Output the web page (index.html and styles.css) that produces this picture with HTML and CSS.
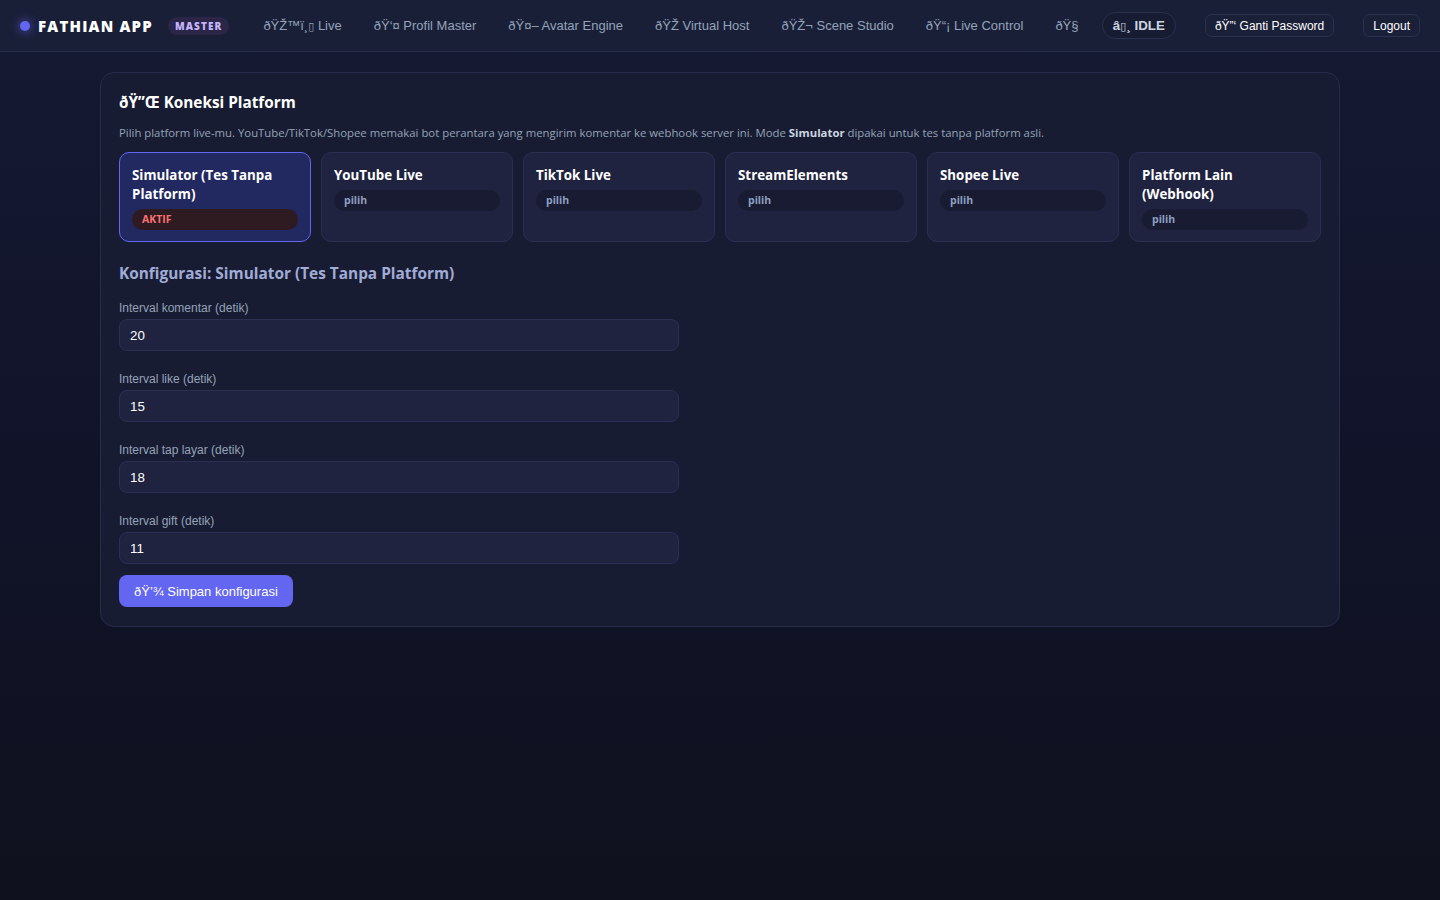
FILE: index.html
```html
<!DOCTYPE html>
<html lang="id">
<head>
<meta charset="utf-8">
<title>Fathian App</title>
<link rel="stylesheet" href="styles.css">
</head>
<body>
<header class="topbar">
  <div class="brand">
    <span class="brand-dot"></span>
    <span class="brand-name">FATHIAN APP</span>
    <span class="brand-badge">MASTER</span>
  </div>
  <nav class="tabs">
    <button class="tab">ðŸŽ™ï¸<span class="tofu">▯</span> Live</button>
    <button class="tab">ðŸ‘¤ Profil Master</button>
    <button class="tab">ðŸ¤– Avatar Engine</button>
    <button class="tab">ðŸŽ&shy; Virtual Host</button>
    <button class="tab">ðŸŽ¬ Scene Studio</button>
    <button class="tab">ðŸ“¡ Live Control</button>
    <button class="tab">ðŸ§&shy;</button>
  </nav>
  <div class="actions">
    <span class="status-pill">â<span class="tofu">▯</span>¸ IDLE</span>
    <button class="btn-ghost">ðŸ”‘ Ganti Password</button>
    <button class="btn-ghost">Logout</button>
  </div>
</header>

<main class="page">
  <section class="panel">
    <h2 class="panel-title">ðŸ”Œ Koneksi Platform</h2>
    <p class="panel-desc">Pilih platform live-mu. YouTube/TikTok/Shopee memakai bot perantara yang mengirim komentar ke webhook server ini. Mode <b>Simulator</b> dipakai untuk tes tanpa platform asli.</p>

    <div class="platforms">
      <div class="platform active">
        <div class="platform-name">Simulator (Tes Tanpa Platform)</div>
        <span class="platform-tag tag-active">AKTIF</span>
      </div>
      <div class="platform">
        <div class="platform-name">YouTube Live</div>
        <span class="platform-tag">pilih</span>
      </div>
      <div class="platform">
        <div class="platform-name">TikTok Live</div>
        <span class="platform-tag">pilih</span>
      </div>
      <div class="platform">
        <div class="platform-name">StreamElements</div>
        <span class="platform-tag">pilih</span>
      </div>
      <div class="platform">
        <div class="platform-name">Shopee Live</div>
        <span class="platform-tag">pilih</span>
      </div>
      <div class="platform">
        <div class="platform-name">Platform Lain (Webhook)</div>
        <span class="platform-tag">pilih</span>
      </div>
    </div>

    <h3 class="config-title">Konfigurasi: Simulator (Tes Tanpa Platform)</h3>

    <form class="config-form">
      <div class="field">
        <label class="field-label">Interval komentar (detik)</label>
        <input class="field-input" type="text" value="20">
      </div>
      <div class="field">
        <label class="field-label">Interval like (detik)</label>
        <input class="field-input" type="text" value="15">
      </div>
      <div class="field">
        <label class="field-label">Interval tap layar (detik)</label>
        <input class="field-input" type="text" value="18">
      </div>
      <div class="field last">
        <label class="field-label">Interval gift (detik)</label>
        <input class="field-input" type="text" value="11">
      </div>
      <button type="button" class="btn-primary">ðŸ’¾ Simpan konfigurasi</button>
    </form>
  </section>
</main>
</body>
</html>
```

FILE: styles.css
```css
* { box-sizing: border-box; }

html, body {
  margin: 0;
  min-height: 100%;
}

body {
  min-height: 900px;
  background: linear-gradient(180deg, #151a33 0%, #11142a 45%, #0f111e 100%);
  color: #e2e8f0;
  font-family: "Open Sans", "Noto Sans", sans-serif;
}

/* ---------- top bar ---------- */
.topbar {
  height: 52px;
  display: flex;
  align-items: center;
  padding: 0 20px;
  background: #1a1f38;
  border-bottom: 1px solid #262b47;
  white-space: nowrap;
}

.brand {
  display: flex;
  align-items: center;
  flex-shrink: 0;
}

.brand-dot {
  width: 10px;
  height: 10px;
  border-radius: 50%;
  background: #6366f1;
  box-shadow: 0 0 10px 2px rgba(99, 102, 241, 0.45);
  margin-right: 8px;
}

.brand-name {
  font-weight: 800;
  font-size: 15px;
  letter-spacing: 1.2px;
  color: #ffffff;
}

.brand-badge {
  margin-left: 15px;
  padding: 2px 7px;
  border-radius: 999px;
  background: #2b2548;
  color: #c4b5fd;
  font-size: 10px;
  font-weight: 800;
  letter-spacing: 1.1px;
  line-height: 14px;
}

.tabs {
  display: flex;
  align-items: center;
  margin-left: 18px;
  flex-shrink: 0;
}

.tab {
  background: transparent;
  border: none;
  padding: 6px 16px;
  color: #94a3b8;
  font-family: "Liberation Sans", Arial, sans-serif;
  font-size: 13px;
  white-space: nowrap;
}

.tofu {
  font-family: "DejaVu Sans", sans-serif;
  font-size: 0.85em;
  font-weight: 400;
}

.actions {
  display: flex;
  align-items: center;
  margin-left: auto;
  gap: 29px;
  flex-shrink: 0;
}

.status-pill {
  display: inline-flex;
  align-items: center;
  height: 27px;
  padding: 0 10px;
  border: 1px solid #2a3050;
  border-radius: 999px;
  background: #181c33;
  color: #cbd5e1;
  font-family: "Liberation Sans", Arial, sans-serif;
  font-weight: 700;
  font-size: 13.33px;
  white-space: nowrap;
}

.btn-ghost {
  height: 23px;
  padding: 0 9px;
  border: 1px solid #2a3050;
  border-radius: 7px;
  background: #1b2039;
  color: #ffffff;
  font-family: "Liberation Sans", Arial, sans-serif;
  font-size: 12px;
  white-space: nowrap;
}

/* ---------- main panel ---------- */
.page {
  padding: 20px 100px;
}

.panel {
  max-width: 1240px;
  margin: 0 auto;
  padding: 18px 18px 19px;
  background: #181c32;
  border: 1px solid #272c48;
  border-radius: 14px;
}

.panel-title {
  margin: 0;
  font-size: 15.3px;
  font-weight: 700;
  line-height: 22px;
  color: #ffffff;
}

.panel-desc {
  margin: 12px 0 11px;
  font-size: 11.35px;
  line-height: 16px;
  color: #94a3b8;
}

.panel-desc b {
  color: #cbd5e1;
}

.platforms {
  display: grid;
  grid-template-columns: repeat(6, 1fr);
  gap: 10px;
}

.platform {
  padding: 13px 12px 11px;
  background: #1f2340;
  border: 1px solid #2b3052;
  border-radius: 10px;
}

.platform.active {
  background: #222860;
  border-color: #6366f1;
}

.platform-name {
  font-size: 13.35px;
  font-weight: 700;
  line-height: 19px;
  color: #ffffff;
}

.platform-tag {
  display: block;
  margin-top: 5px;
  padding: 0 10px;
  height: 21px;
  line-height: 21px;
  border-radius: 999px;
  background: #181b31;
  color: #8ea0c2;
  font-size: 10.5px;
  font-weight: 700;
}

.platform-tag.tag-active {
  background: #2e1b22;
  color: #f87171;
}

.config-title {
  margin: 21px 0 17px;
  font-size: 15.4px;
  font-weight: 700;
  line-height: 21px;
  color: #a0abd6;
}

.config-form {
  display: flex;
  flex-direction: column;
  align-items: flex-start;
}

.field {
  display: flex;
  flex-direction: column;
  width: 560px;
  margin-bottom: 21px;
}

.field.last {
  margin-bottom: 11px;
}

.field-label {
  font-family: "Liberation Sans", Arial, sans-serif;
  font-size: 12px;
  line-height: 15px;
  color: #94a3b8;
  margin-bottom: 3px;
}

.field-input {
  height: 32px;
  padding: 0 10px;
  background: #1f2340;
  border: 1px solid #2b3052;
  border-radius: 8px;
  color: #ffffff;
  font-family: "Liberation Sans", Arial, sans-serif;
  font-size: 13.33px;
  outline: none;
}

.btn-primary {
  height: 32px;
  padding: 0 15px;
  border: none;
  border-radius: 8px;
  background: #6366f1;
  color: #ffffff;
  font-family: "Liberation Sans", Arial, sans-serif;
  font-size: 13px;
}
```
